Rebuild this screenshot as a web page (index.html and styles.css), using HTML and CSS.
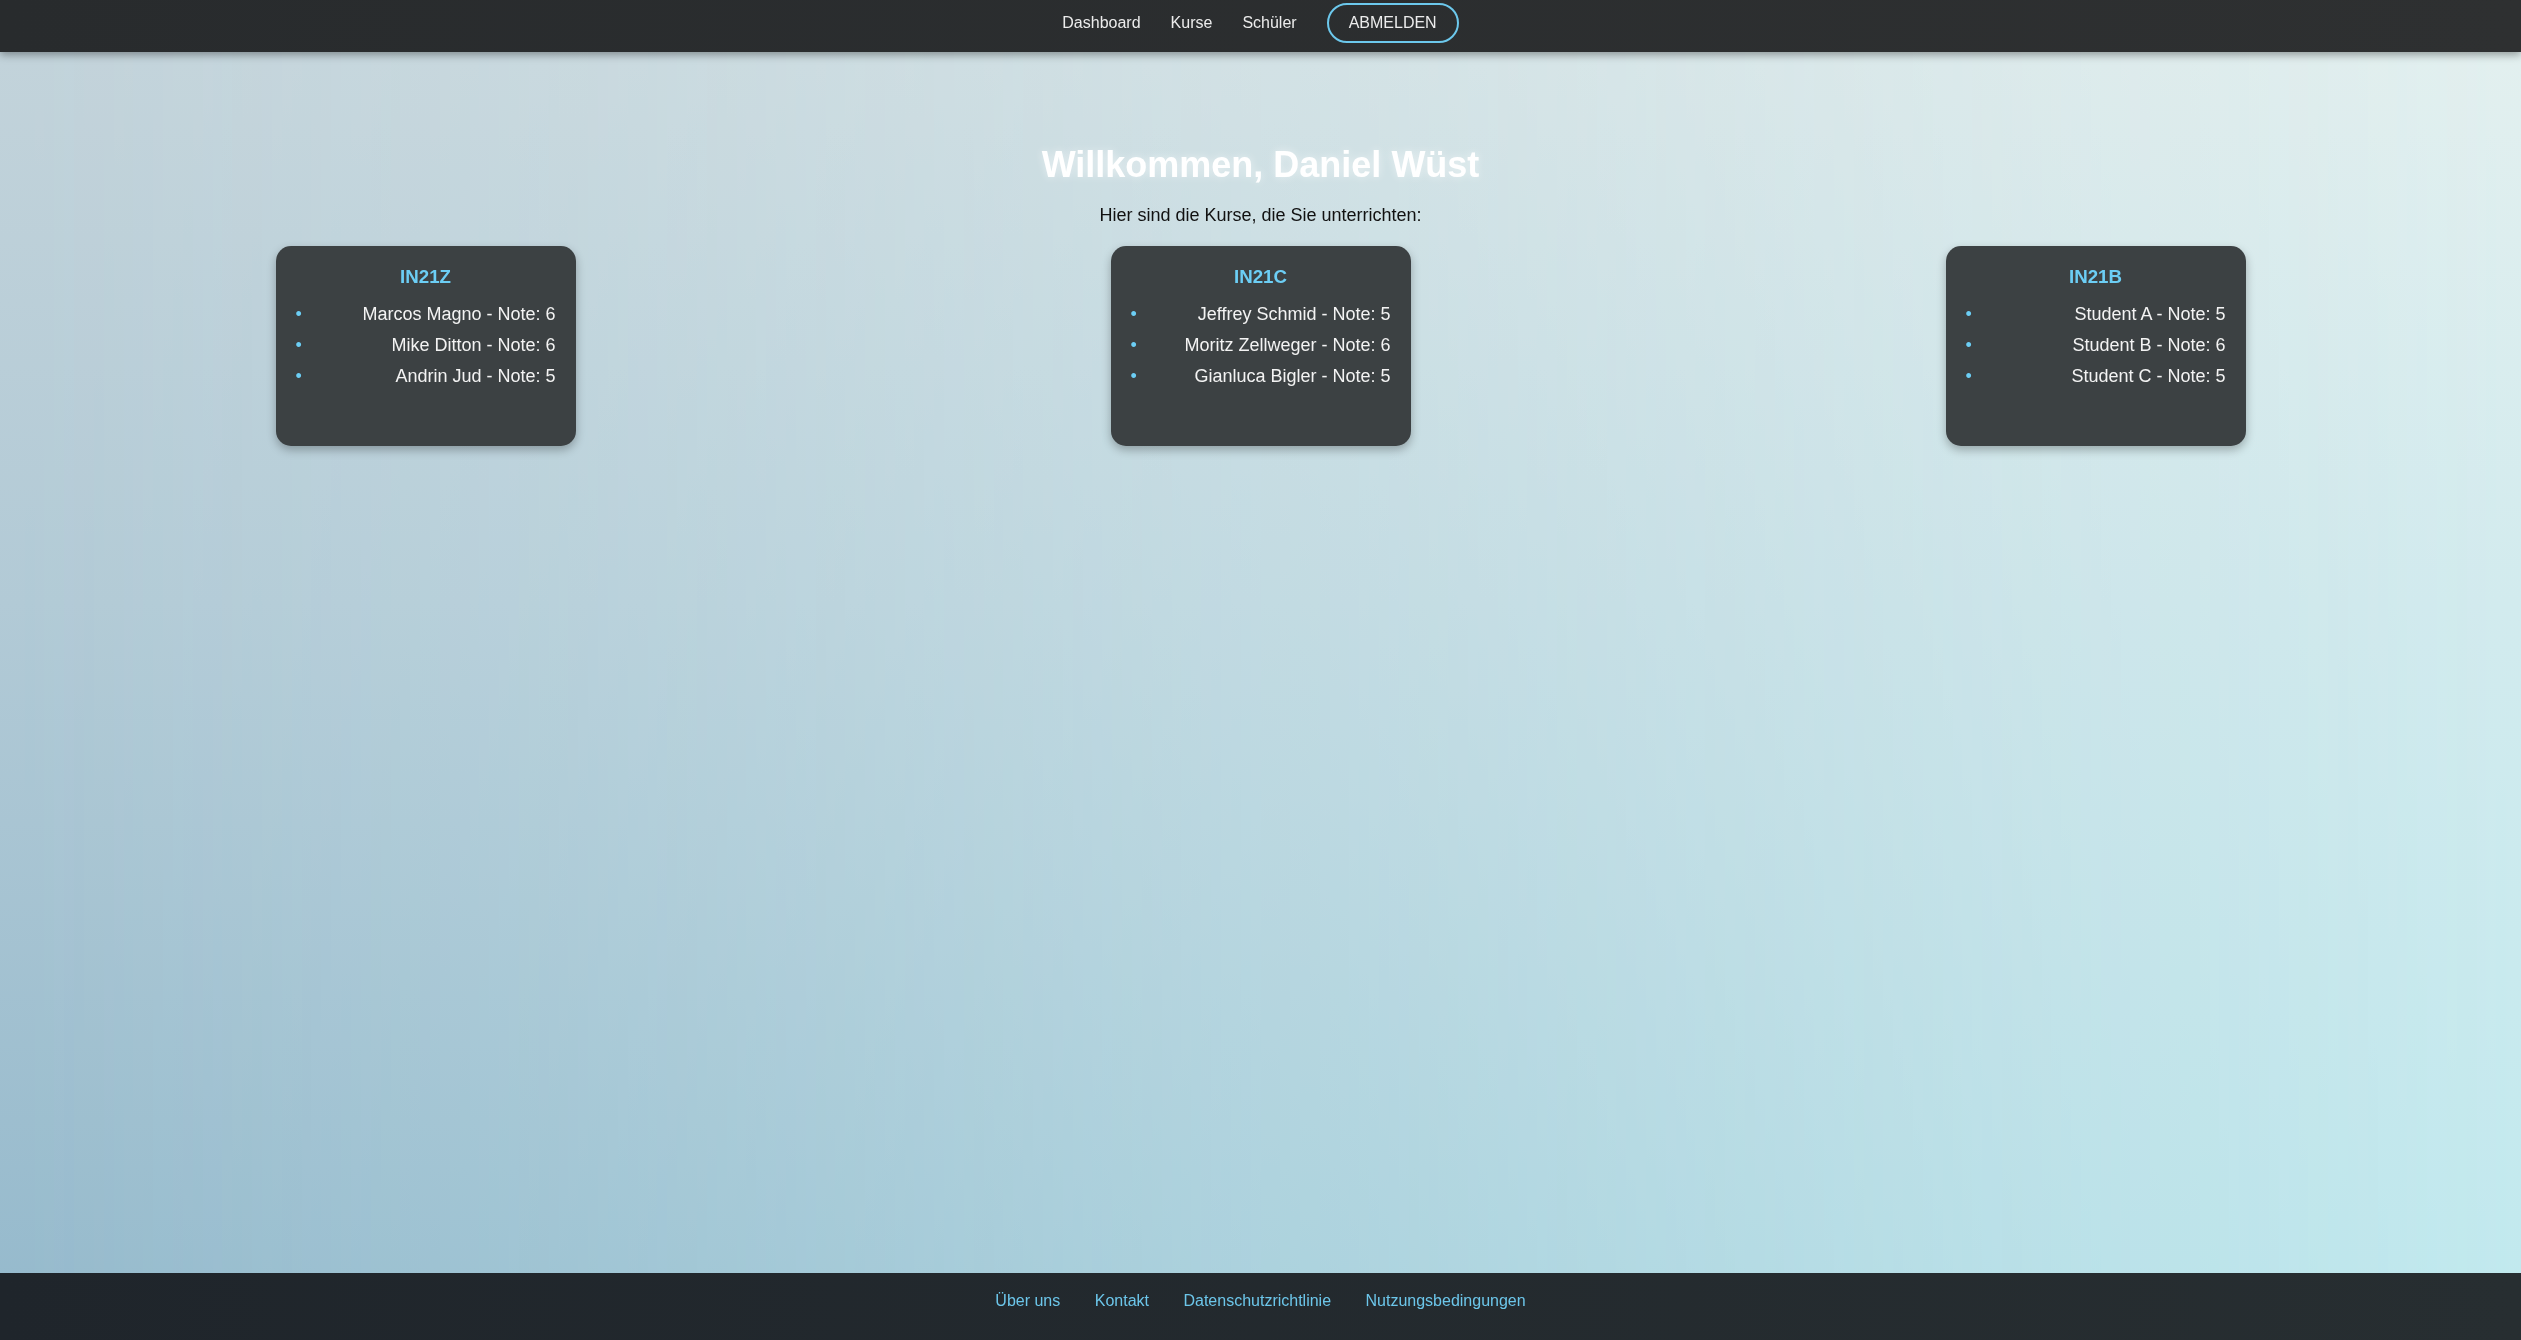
FILE: index.html
```html
<!DOCTYPE html>
<html lang="de">
<head>
<meta charset="utf-8">
<title>Dashboard</title>
<link rel="stylesheet" href="styles.css">
</head>
<body>
<div class="backdrop"></div>
<nav class="topbar">
  <ul class="nav-list">
    <li><a href="#" class="nav-link">Dashboard</a></li>
    <li><a href="#" class="nav-link">Kurse</a></li>
    <li><a href="#" class="nav-link">Schüler</a></li>
    <li><a href="#" class="logout">ABMELDEN</a></li>
  </ul>
</nav>
<main class="main">
  <h1 class="welcome">Willkommen, Daniel Wüst</h1>
  <p class="intro">Hier sind die Kurse, die Sie unterrichten:</p>
  <div class="courses">
    <section class="card">
      <h3 class="card-title">IN21Z</h3>
      <ul class="students">
        <li>Marcos Magno - Note: 6</li>
        <li>Mike Ditton - Note: 6</li>
        <li>Andrin Jud - Note: 5</li>
      </ul>
    </section>
    <section class="card">
      <h3 class="card-title">IN21C</h3>
      <ul class="students">
        <li>Jeffrey Schmid - Note: 5</li>
        <li>Moritz Zellweger - Note: 6</li>
        <li>Gianluca Bigler - Note: 5</li>
      </ul>
    </section>
    <section class="card">
      <h3 class="card-title">IN21B</h3>
      <ul class="students">
        <li>Student A - Note: 5</li>
        <li>Student B - Note: 6</li>
        <li>Student C - Note: 5</li>
      </ul>
    </section>
  </div>
</main>
<footer class="footer">
  <a href="#" class="foot-link">Über uns</a>
  <a href="#" class="foot-link">Kontakt</a>
  <a href="#" class="foot-link">Datenschutzrichtlinie</a>
  <a href="#" class="foot-link">Nutzungsbedingungen</a>
</footer>
</body>
</html>
```
FILE: styles.css
```css
* { box-sizing: border-box; }

html, body {
  margin: 0;
  padding: 0;
}

body {
  min-height: 100vh;
  display: flex;
  flex-direction: column;
  font-family: "Liberation Sans", Arial, sans-serif;
  color: #111;
}

.backdrop {
  position: fixed;
  inset: 0;
  z-index: -2;
  background: linear-gradient(to bottom, #c4d4db 0%, #b2cad6 45%, #94b9cc 100%);
}

.backdrop::after {
  content: "";
  position: absolute;
  inset: 0;
  background: linear-gradient(to bottom, #e4f0ef 0%, #d2ebee 45%, #c0e9ee 100%);
  -webkit-mask-image: linear-gradient(to right, transparent 0%, #000 100%);
  mask-image: linear-gradient(to right, transparent 0%, #000 100%);
}

/* top navigation */
.topbar {
  height: 52px;
  padding-bottom: 7px;
  display: flex;
  align-items: center;
  justify-content: center;
  background: linear-gradient(to right, #282b2d, #2e3031);
  box-shadow: 0 3px 8px rgba(0, 0, 0, 0.35);
  position: relative;
  z-index: 2;
}

.nav-list {
  list-style: none;
  margin: 0;
  padding: 0;
  display: flex;
  align-items: center;
}

.nav-list li {
  margin: 0 15px;
}

.nav-link {
  color: #ececec;
  text-decoration: none;
  font-size: 16px;
}

.logout {
  display: block;
  color: #ececec;
  text-decoration: none;
  font-size: 16px;
  padding: 9px 20px;
  border: 2px solid #6cc8ec;
  border-radius: 22px;
  line-height: 18px;
}

/* main */
.main {
  flex: 1;
  display: flex;
  flex-direction: column;
  align-items: center;
}

.welcome {
  margin: 92px 0 19px;
  font-size: 36px;
  font-weight: bold;
  color: #ffffff;
  text-shadow: 0 0 8px rgba(255, 255, 255, 0.55);
}

.intro {
  margin: 0 0 20px;
  font-size: 18px;
  color: #111;
}

.courses {
  width: 1970px;
  display: flex;
  justify-content: space-between;
}

.card {
  width: 300px;
  height: 200px;
  padding: 20px;
  background: #3c4143;
  border-radius: 15px;
  box-shadow: 0 4px 10px rgba(0, 0, 0, 0.28);
}

.card-title {
  margin: 0 0 15.5px;
  font-size: 18.72px;
  font-weight: bold;
  text-align: center;
  color: #6ccef5;
}

.students {
  list-style: none;
  margin: 0;
  padding: 0;
}

.students li {
  display: flex;
  justify-content: space-between;
  font-size: 18px;
  color: #f3f3f3;
  margin-bottom: 10px;
}

.students li::before {
  content: "\2022";
  color: #6ccef5;
}

/* footer */
.footer {
  height: 67px;
  padding-top: 19px;
  text-align: center;
  background: linear-gradient(to right, #1f252b, #272e31);
}

.foot-link {
  margin: 0 15px;
  font-size: 16px;
  color: #6cc6ea;
  text-decoration: none;
}
```
